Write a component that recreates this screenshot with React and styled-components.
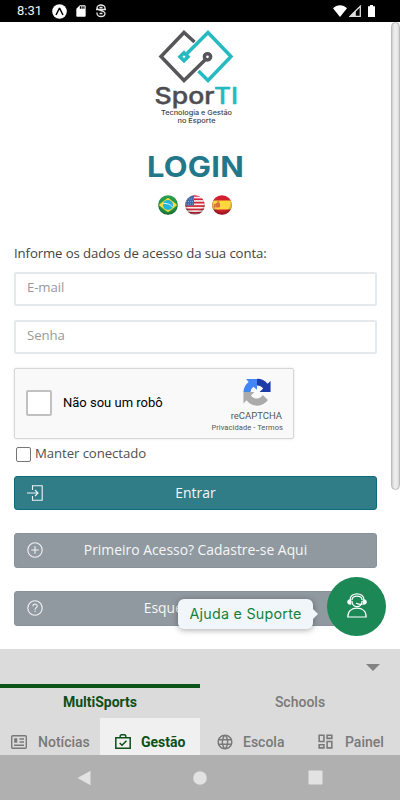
import React, { useState } from 'react';
import styled, { createGlobalStyle } from 'styled-components';
import { MdLanguage, MdOutlineDashboard, MdSdCard } from 'react-icons/md';

const GlobalStyle = createGlobalStyle`
    * {
        box-sizing: border-box;
    }

    body {
        margin: 0;
        background: #fff;
        overflow: hidden;
    }

    button,
    input {
        font-family: inherit;
    }
`;

const Phone = styled.div`
    position: relative;
    width: 400px;
    height: 800px;
    display: flex;
    flex-direction: column;
    overflow: hidden;
    background: #fff;
    font-family: 'Open Sans', 'Liberation Sans', sans-serif;
`;

const StatusBar = styled.div`
    height: 22px;
    flex-shrink: 0;
    display: flex;
    align-items: center;
    padding: 0 25px 0 17px;
    background: #000;
    color: #f2f2f2;
    font: 400 13px/22px Roboto, sans-serif;

    svg {
        display: block;
    }
`;

const Clock = styled.span`
    width: 35px;
`;

const StatusGroup = styled.div`
    display: flex;
    align-items: center;
    gap: ${(props) => props.$gap}px;
    margin-left: ${(props) => (props.$end ? 'auto' : '0')};
`;

const Body = styled.div`
    height: 627px;
    flex-shrink: 0;
    display: flex;
    overflow: hidden;
`;

const Page = styled.main`
    width: 391px;
    padding: 0 14px;
    display: flex;
    flex-direction: column;
`;

const ScrollTrack = styled.div`
    width: 9px;
`;

const ScrollThumb = styled.div`
    height: 468px;
    border-radius: 5px;
    border: 1px solid #bcbcbc;
    background: linear-gradient(90deg, #cfcfcf, #ececec 35%, #ececec 70%, #d6d6d6);
`;

const LogoBox = styled.div`
    height: 108px;
    display: flex;
    justify-content: center;

    svg {
        display: block;
    }
`;

const Title = styled.h1`
    height: 40px;
    margin: 17px 0 0;
    font: 700 28.5px/40px Inter, sans-serif;
    letter-spacing: 0.2px;
    text-align: center;
    color: #22788a;
    transform: scaleX(1.085);
`;

const Languages = styled.div`
    display: flex;
    justify-content: center;
    gap: 7px;
    margin-top: 8px;
    padding-right: 1px;
    height: 20px;

    svg {
        display: block;
    }
`;

const Hint = styled.p`
    margin: 27px 0 8px;
    height: 22px;
    font-size: 13.2px;
    letter-spacing: -0.11px;
    line-height: 22px;
    color: #444;
    white-space: nowrap;
`;

const Field = styled.input`
    width: 363px;
    height: 34px;
    margin-bottom: 14px;
    padding: 0 11px 5px;
    border: 2px solid #e4e9ed;
    border-radius: 2px;
    background: #fff;
    font-size: 13.2px;
    letter-spacing: -0.1px;
    outline: none;

    &::placeholder {
        color: #999;
        opacity: 1;
    }
`;

const Captcha = styled.div`
    width: 280px;
    height: 71px;
    display: flex;
    align-items: center;
    padding: 0 10px 0 11px;
    border: 1px solid #d6d6d6;
    border-radius: 2px;
    background: #f9f9f9;
    box-shadow: 0 0 3px rgba(0, 0, 0, 0.1);
    font-family: Roboto, sans-serif;
`;

const CaptchaCheck = styled.button`
    width: 26px;
    height: 26px;
    padding: 0;
    border: 2px solid #c1c1c1;
    border-radius: 2px;
    background: #fff;
    margin: 0 11px 2px 0;
`;

const CaptchaLabel = styled.span`
    flex: 1;
    font-size: 13px;
    padding-bottom: 2px;
    color: #000;
    white-space: nowrap;
`;

const CaptchaBrand = styled.div`
    width: 74px;
    display: flex;
    flex-direction: column;
    align-items: center;
    color: #555;
    white-space: nowrap;

    svg {
        display: block;
        margin: 4px 0 3px 21px;
    }
`;

const CaptchaName = styled.span`
    align-self: flex-end;
    font-size: 9.5px;
    line-height: 13px;
    padding-right: 1px;
`;

const CaptchaLinks = styled.span`
    align-self: flex-end;
    font-size: 7.5px;
    line-height: 11px;
    letter-spacing: 0.08px;
`;

const Remember = styled.label`
    height: 30px;
    display: flex;
    align-items: center;
    padding-left: 2px;
    margin-bottom: 7px;
    font-size: 13.2px;
    letter-spacing: -0.08px;
    color: #505050;

    span {
        padding-bottom: 2px;
    }
`;

const RememberBox = styled.input`
    appearance: none;
    width: 15px;
    height: 15px;
    margin: 1px 4px 0 0;
    border: 1px solid #767676;
    border-radius: 2px;
    background: #fff;
`;

const ActionButton = styled.button`
    width: 363px;
    height: ${(props) => (props.$primary ? 34 : 35)}px;
    flex-shrink: 0;
    display: grid;
    grid-template-columns: 16px 1fr 16px;
    align-items: center;
    margin: 0 0 23px;
    padding: 0 12px 1px;
    border: 1px solid ${(props) => (props.$primary ? '#0b6c7a' : '#87929a')};
    border-radius: 3px;
    background: ${(props) => (props.$primary ? '#307d88' : '#9199a0')};
    color: #f5f7f8;
    font-size: 13.9px;
    line-height: 20px;
    white-space: nowrap;

    svg {
        display: block;
    }
`;

const HelpArea = styled.div`
    position: absolute;
    right: 14px;
    top: 577px;
    display: flex;
    align-items: center;
    gap: 14px;
`;

const HelpBubble = styled.div`
    position: relative;
    width: 135px;
    height: 30px;
    margin-top: 15px;
    border-radius: 6px;
    background: #f1f6fb;
    box-shadow: 0 1px 6px rgba(0, 0, 0, 0.35);
    color: #15803d;
    font: 400 14.3px/30px Inter, sans-serif;
    letter-spacing: 0.25px;
    text-align: center;
    white-space: nowrap;

    &::after {
        content: '';
        position: absolute;
        left: 100%;
        top: 10px;
        border: 5px solid transparent;
        border-left-color: #f1f6fb;
        border-right: 0;
    }
`;

const HelpButton = styled.button`
    width: 59px;
    height: 59px;
    padding: 0 0 2px;
    display: flex;
    align-items: center;
    justify-content: center;
    border: 0;
    border-radius: 50%;
    background: #1c8856;
`;

const Drawer = styled.nav`
    flex-shrink: 0;
    background: #dbdbdb;
    font-family: Roboto, sans-serif;
`;

const DrawerHandle = styled.div`
    height: 35px;
    display: flex;
    justify-content: flex-end;
    padding: 15px 20px 0 0;
`;

const Groups = styled.div`
    display: grid;
    grid-template-columns: 1fr 1fr;
`;

const Group = styled.div`
    height: 34px;
    border-top: 4px solid ${(props) => (props.$active ? '#0b5519' : 'transparent')};
    text-align: center;
    font-size: 14px;
    line-height: 29px;
    font-weight: ${(props) => (props.$active ? 700 : 500)};
    color: ${(props) => (props.$active ? '#0c4f17' : '#797979')};
`;

const Tabs = styled.div`
    display: grid;
    grid-template-columns: repeat(4, 100px);
`;

const Tab = styled.div`
    height: 37px;
    display: flex;
    align-items: center;
    padding: 10px 0 0 ${(props) => props.$left}px;
    gap: ${(props) => props.$gap}px;
    font-size: 14px;
    font-weight: ${(props) => (props.$active ? 700 : 500)};
    background: ${(props) => (props.$active ? '#f0f0f0' : 'transparent')};
    color: ${(props) => (props.$active ? '#0c4f17' : '#797979')};
    white-space: nowrap;

    svg {
        display: block;
        flex-shrink: 0;
    }
`;

const SystemNav = styled.div`
    flex: 1;
    display: flex;
    align-items: center;
    justify-content: space-between;
    padding: 0 77px 0 77px;
    background: #b0b0b0;
`;

function Logo() {
    return (
        <svg width="90" height="108" viewBox="151 22 90 108" fill="none">
            <g stroke="#56565a" strokeWidth="3.500">
                <path d="M194.500 42 L184 32.500 L161 56.500 L184 80.500 L205.500 59.500" />
                <circle cx="207.500" cy="56.800" r="3.100" />
            </g>
            <g stroke="#25b9c1" strokeWidth="3.500">
                <path d="M187 53.500 L208 32.500 L231 56.500 L208 80.500 L198.500 71" />
                <path d="M184 52.800 L188 56.800 L184 60.800 L180 56.800 Z" />
            </g>
            <g fontFamily="Inter, sans-serif">
                <text x="154.500" y="104" fontSize="22.500" fontWeight="500" fill="#4d4d51" stroke="#4d4d51" strokeWidth=".4" textLength="60" lengthAdjust="spacingAndGlyphs">
                    Spor
                </text>
                <text x="214" y="104" fontSize="22.500" fontWeight="500" fill="#25b9c1" stroke="#25b9c1" strokeWidth=".4" textLength="24" lengthAdjust="spacingAndGlyphs">
                    TI
                </text>
                <text x="161" y="115" fontSize="6.500" fontWeight="500" fill="#3d3d40" textLength="71" lengthAdjust="spacingAndGlyphs">
                    Tecnologia e Gestão
                </text>
                <text x="177.500" y="123" fontSize="6.500" fontWeight="500" fill="#3d3d40" textLength="38" lengthAdjust="spacingAndGlyphs">
                    no Esporte
                </text>
            </g>
        </svg>
    );
}

function Flag({ country }) {
    return (
        <svg width="20" height="20" viewBox="0 0 20 20">
            <defs>
                <clipPath id={`round-${country}`}>
                    <circle cx="10" cy="10" r="9.800" />
                </clipPath>
                <radialGradient id={`shade-${country}`} cx="50%" cy="40%" r="60%">
                    <stop offset="0.65" stopColor="#000" stopOpacity="0" />
                    <stop offset="1" stopColor="#000" stopOpacity="0.4" />
                </radialGradient>
            </defs>
            <g clipPath={`url(#round-${country})`}>
                {country === 'br' && (
                    <>
                        <rect width="20" height="20" fill="#259b4b" />
                        <path d="M10 2.800 L19.500 10 L10 17.200 L.5 10 Z" fill="#f4dc3a" />
                        <circle cx="10" cy="10" r="5" fill="#20b5d8" />
                        <path d="M5.300 8.500 Q11 8 14.500 12" stroke="#d8f4f4" fill="none" />
                    </>
                )}
                {country === 'us' && (
                    <>
                        <rect width="20" height="20" fill="#f6eeee" />
                        {[0, 3.4, 6.8, 10.2, 13.6, 17].map((y) => (
                            <rect key={y} y={y} width="20" height="1.700" fill="#cf2638" />
                        ))}
                        <rect width="9" height="10.500" fill="#3d6aa8" />
                        <path d="M2 4 H9 M1 6.500 H9 M1 9 H9" stroke="#a9c0dc" strokeWidth=".7" strokeDasharray="1 1" />
                    </>
                )}
                {country === 'es' && (
                    <>
                        <rect width="20" height="20" fill="#d3202f" />
                        <rect y="5.500" width="20" height="9" fill="#fcd73d" />
                        <rect x="3.500" y="8" width="4.500" height="4.500" rx="1" fill="#d8713a" />
                        <path d="M5 7 H7.500 M2.800 9 V12.500" stroke="#b5543a" />
                    </>
                )}
                <rect width="20" height="20" fill={`url(#shade-${country})`} />
            </g>
        </svg>
    );
}

function CaptchaLogo() {
    return (
        <svg width="28" height="28" viewBox="0 0 64 64">
            <path d="M32 2 A30 30 0 0 1 56 13 L63 7 V32 H38 L46 24 A16 16 0 0 0 32 17 Z" fill="#1c3aa9" />
            <path d="M32 2 H7 L13 9 A30 30 0 0 0 1 32 H17 A16 16 0 0 1 24 20 L32 27 Z" fill="#4285f4" />
            <path d="M1 32 V58 L8 51 A30 30 0 0 0 57 50 L45 39 A16 16 0 0 1 18 40 L26 32 Z" fill="#ababab" />
        </svg>
    );
}

function ButtonIcon({ name }) {
    return (
        <svg width="16" height="16" viewBox="0 0 16 16" fill="none" stroke="#f1f4f5" strokeWidth="1.100">
            {name === 'enter' && <path d="M5.500 5 V.7 H15.200 V15.300 H5.500 V11 M0 8 H11 M8 5 L11 8 L8 11" />}
            {name !== 'enter' && <circle cx="8" cy="8" r="7.200" />}
            {name === 'plus' && <path d="M8 4.300 V11.700 M4.300 8 H11.700" />}
            {name === 'help' && (
                <path d="M5.900 6.200 C5.900 3.300 10.200 3.400 10.200 6.100 C10.200 7.600 8.100 7.700 8.100 9.700 M8.100 10.700 V12" />
            )}
        </svg>
    );
}

function AgentIcon() {
    return (
        <svg width="20" height="25" viewBox="0 0 20 25" fill="none" stroke="#fff" strokeWidth="1.200">
            <path d="M3 7 C3 -1.300 17 -1.300 17 7" />
            <path d="M5 7 C5 1.800 15 1.800 15 7" />
            <path d="M5 8 C5 15.500 15 15.500 15 8" />
            <path d="M3.700 7 C-.2 6.500 -.2 11.500 3.700 11 Z M16.300 7 C20.200 6.500 20.200 11.500 16.300 11 Z" fill="#fff" />
            <path d="M15.500 11 C14 12 12 11.500 9 10.300" />
            <path d="M.8 24 C.8 18 4.500 15.200 10 15.200 C15.500 15.200 19.200 18 19.200 24 Z" />
        </svg>
    );
}

function NewsIcon() {
    return (
        <svg width="16" height="14" viewBox="0 0 16 14" fill="none" stroke="currentColor" strokeWidth="1.400">
            <rect x=".7" y=".7" width="14.600" height="12.600" rx="1" />
            <path d="M8.500 4 H13 M8.500 7 H13 M3 10.200 H13" />
            <path d="M4.700 3.300 V7.700" strokeWidth="3.200" />
        </svg>
    );
}

function BriefcaseIcon() {
    return (
        <svg width="16" height="15" viewBox="0 0 16 15" fill="none" stroke="currentColor" strokeWidth="1.500">
            <path d="M.8 3.800 H15.200 V14.200 H.8 Z M5.200 3.500 V1.800 L6.200 .8 H9.800 L10.800 1.800 V3.500 M4.700 9 L7 11.300 L11.500 6.800" />
        </svg>
    );
}

const tabs = [
    { name: 'Notícias', icon: <NewsIcon />, left: 11, gap: 11 },
    { name: 'Gestão', icon: <BriefcaseIcon />, left: 15, gap: 10, active: true },
    { name: 'Escola', icon: <MdLanguage size={18} />, left: 16, gap: 9 },
    { name: 'Painel', icon: <MdOutlineDashboard size={19} />, left: 16, gap: 10 },
];

function App() {
    const [email, emailSet] = useState('');
    const [password, passwordSet] = useState('');

    return (
        <>
            <GlobalStyle />
            <Phone>
                <StatusBar>
                    <Clock>8:31</Clock>
                    <StatusGroup $gap={7}>
                        <svg width="15" height="15" viewBox="0 0 15 15">
                            <circle cx="7.500" cy="7.500" r="7.300" fill="#fff" />
                            <path d="M4 11 L7.300 4.500 H7.700 L11 11" fill="none" stroke="#000" strokeWidth="1.500" />
                        </svg>
                        <MdSdCard size={14} color="#fff" />
                        <svg width="12" height="14" viewBox="0 0 12 14" fill="none" stroke="#e8e8e8" strokeWidth="1.300">
                            <path d="M10 5.500 V4 C10 0 2 0 2 4 C2 7.500 10 5.500 10 9.500 C10 13.500 2 13.500 2 9.500 V8.500 M1 5.500 H11 M4.500 3.500 H7.500 M4.500 9.500 H7.500" />
                        </svg>
                    </StatusGroup>
                    <StatusGroup $gap={2} $end>
                        <svg width="14" height="12" viewBox="0 0 14 12">
                            <path d="M0 3.300 C4 -.7 10 -.7 14 3.300 L7 12 Z" fill="#fff" />
                        </svg>
                        <svg width="12" height="12" viewBox="0 0 12 12">
                            <path d="M11.300 1.200 V11.300 H1.200 Z" fill="none" stroke="#ddd" strokeWidth="1.300" />
                            <path d="M0 12 L6.800 5.200 V12 Z" fill="#ddd" />
                        </svg>
                        <svg width="12" height="12" viewBox="0 0 12 12">
                            <path d="M5 1.300 H7 V0 H10 V1.300 H12 V12 H5 Z" fill="#fff" />
                        </svg>
                    </StatusGroup>
                </StatusBar>
                <Body>
                    <Page>
                        <LogoBox>
                            <Logo />
                        </LogoBox>
                        <Title>LOGIN</Title>
                        <Languages>
                            <Flag country="br" />
                            <Flag country="us" />
                            <Flag country="es" />
                        </Languages>
                        <Hint>Informe os dados de acesso da sua conta:</Hint>
                        <Field placeholder="E-mail" value={email} onChange={(e) => emailSet(e.target.value)} />
                        <Field
                            type="password"
                            placeholder="Senha"
                            value={password}
                            onChange={(e) => passwordSet(e.target.value)}
                        />
                        <Captcha>
                            <CaptchaCheck />
                            <CaptchaLabel>Não sou um robô</CaptchaLabel>
                            <CaptchaBrand>
                                <CaptchaLogo />
                                <CaptchaName>reCAPTCHA</CaptchaName>
                                <CaptchaLinks>Privacidade - Termos</CaptchaLinks>
                            </CaptchaBrand>
                        </Captcha>
                        <Remember>
                            <RememberBox type="checkbox" />
                            <span>Manter conectado</span>
                        </Remember>
                        <ActionButton $primary>
                            <ButtonIcon name="enter" />
                            Entrar
                        </ActionButton>
                        <ActionButton>
                            <ButtonIcon name="plus" />
                            Primeiro Acesso? Cadastre-se Aqui
                        </ActionButton>
                        <ActionButton>
                            <ButtonIcon name="help" />
                            Esqueci a senha
                        </ActionButton>
                    </Page>
                    <ScrollTrack>
                        <ScrollThumb />
                    </ScrollTrack>
                </Body>
                <Drawer>
                    <DrawerHandle>
                        <svg width="14" height="7" viewBox="0 0 14 7">
                            <path d="M0 0 H14 L7 7 Z" fill="#828282" />
                        </svg>
                    </DrawerHandle>
                    <Groups>
                        <Group $active>MultiSports</Group>
                        <Group>Schools</Group>
                    </Groups>
                    <Tabs>
                        {tabs.map((tab) => (
                            <Tab key={tab.name} $active={tab.active} $left={tab.left} $gap={tab.gap}>
                                {tab.icon}
                                {tab.name}
                            </Tab>
                        ))}
                    </Tabs>
                </Drawer>
                <SystemNav>
                    <svg width="14" height="16" viewBox="0 0 14 16">
                        <path d="M13.500 .8 V15.200 L.5 8 Z" fill="#e2e2e2" />
                    </svg>
                    <svg width="14" height="14" viewBox="0 0 14 14">
                        <circle cx="7" cy="7" r="6.800" fill="#e2e2e2" />
                    </svg>
                    <svg width="15" height="15" viewBox="0 0 15 15">
                        <rect x=".5" y=".5" width="14" height="14" rx="1" fill="#e2e2e2" />
                    </svg>
                </SystemNav>
                <HelpArea>
                    <HelpBubble>Ajuda e Suporte</HelpBubble>
                    <HelpButton>
                        <AgentIcon />
                    </HelpButton>
                </HelpArea>
            </Phone>
        </>
    );
}

export default App;
